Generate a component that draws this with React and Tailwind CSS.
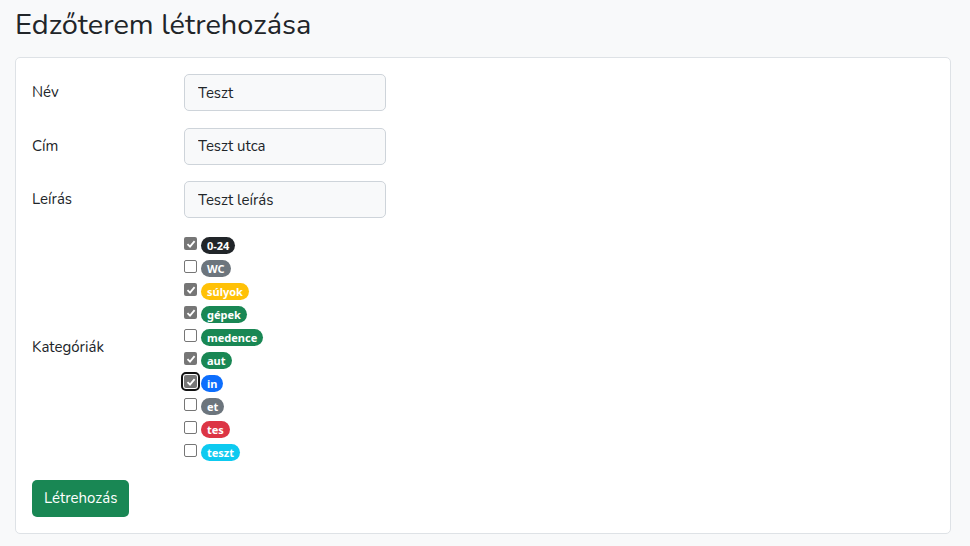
import React from "react";

const categories = [
  { name: "0-24", checked: true, color: "bg-[#212529]" },
  { name: "WC", checked: false, color: "bg-[#6c757d]" },
  { name: "súlyok", checked: true, color: "bg-[#ffc107]" },
  { name: "gépek", checked: true, color: "bg-[#198754]" },
  { name: "medence", checked: false, color: "bg-[#198754]" },
  { name: "aut", checked: true, color: "bg-[#198754]" },
  { name: "in", checked: true, color: "bg-[#0d6efd]", focus: true },
  { name: "et", checked: false, color: "bg-[#6c757d]" },
  { name: "tes", checked: false, color: "bg-[#dc3545]" },
  { name: "teszt", checked: false, color: "bg-[#0dcaf0]" },
];

const CheckBox = ({ checked, focus }) => (
  <span
    className={`relative flex h-[13px] w-[13px] shrink-0 items-center justify-center rounded-[2px] ${
      checked ? "bg-[#767676]" : "border border-[#767676] bg-white"
    } ${focus ? "outline outline-2 outline-offset-1 outline-[#101010]" : ""}`}
  >
    {checked && (
      <svg width="10" height="10" viewBox="0 0 10 10">
        <path d="M1.5 5.2 L4 7.6 L8.6 2.2" fill="none" stroke="white" strokeWidth="1.8" />
      </svg>
    )}
  </span>
);

const Field = ({ label, value }) => (
  <div className="flex items-center">
    <label className="w-[152px] text-[15px] text-[#212529]">{label}</label>
    <input
      defaultValue={value}
      className="h-[37px] w-[202px] rounded-[5px] border border-[#ced4da] bg-[#f8f9fa] px-[13px] text-[15px] text-[#212529] outline-none"
    />
  </div>
);

export default function App() {
  return (
    <div className="min-h-[546px] bg-[#f8f9fa] pl-[15px] pr-[19px] pt-[6px] font-['Nunito','Noto_Sans',sans-serif]">
      <h1 className="text-[29px] leading-[38px] text-[#212529]">Edzőterem létrehozása</h1>

      <div className="mt-[13px] rounded-[5px] border border-[#dee2e6] bg-white p-4">
        <div className="flex flex-col gap-[16.5px]">
          <Field label="Név" value="Teszt" />
          <Field label="Cím" value="Teszt utca" />
          <Field label="Leírás" value="Teszt leírás" />
        </div>

        <div className="mt-[14px] flex items-center">
          <label className="w-[152px] text-[15px] text-[#212529]">Kategóriák</label>
          <div className="flex flex-col">
            {categories.map((c) => (
              <div key={c.name} className="flex h-[23px] items-center gap-[4px]">
                <CheckBox checked={c.checked} focus={c.focus} />
                <span
                  className={`${c.color} mt-[4px] rounded-full px-[6px] py-[2px] font-['Noto_Sans',sans-serif] text-[11px] font-bold leading-[13px] text-white`}
                >
                  {c.name}
                </span>
              </div>
            ))}
          </div>
        </div>

        <button className="mt-[18px] h-[37px] rounded-[5px] bg-[#198754] px-[12px] text-[15px] text-white">
          Létrehozás
        </button>
      </div>
    </div>
  );
}
